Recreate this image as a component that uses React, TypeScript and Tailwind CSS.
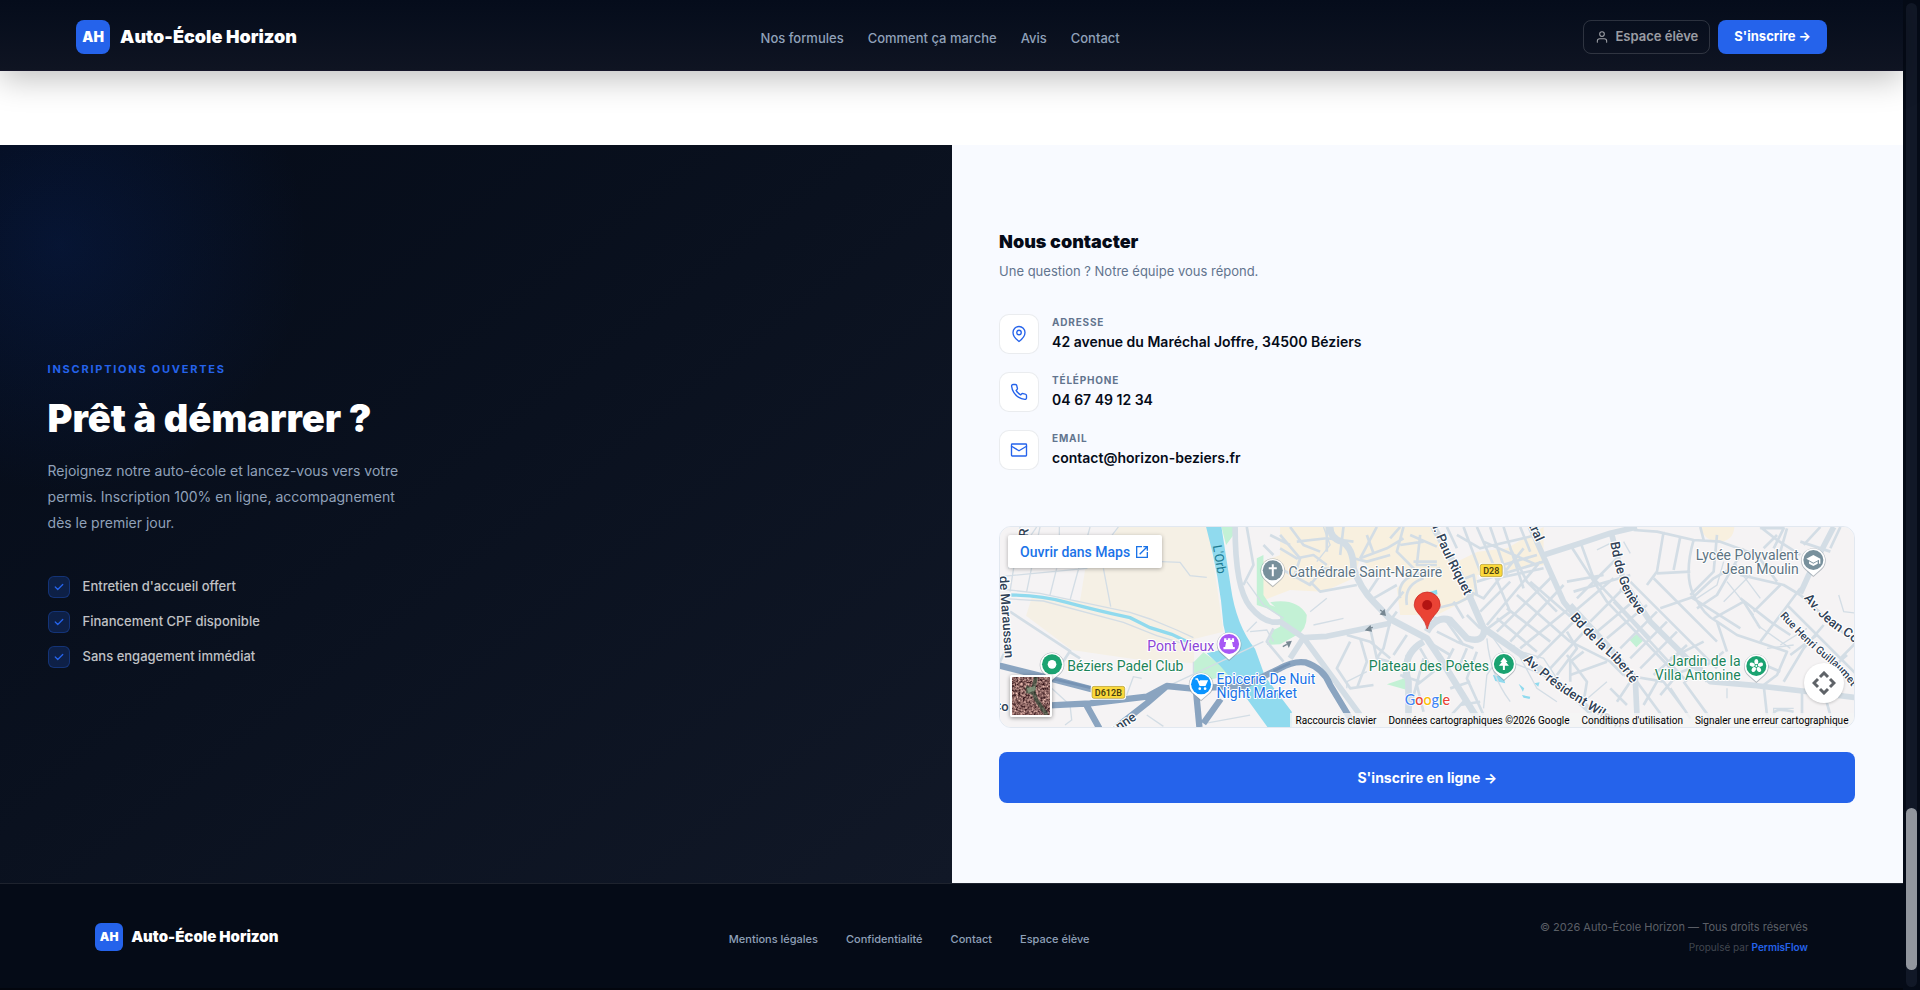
import type { ReactNode } from "react"

const display = "font-['Inter',sans-serif] font-black"

const Icon = ({ size, stroke = 2, children }: { size: number; stroke?: number; children: ReactNode }) => (
    <svg width={size} height={size} viewBox="0 0 24 24" fill="none" stroke="currentColor" strokeWidth={stroke} strokeLinecap="round" strokeLinejoin="round" aria-hidden="true">
        {children}
    </svg>
)

const navLinks = ["Nos formules", "Comment ça marche", "Avis", "Contact"]
const footerLinks = ["Mentions légales", "Confidentialité", "Contact", "Espace élève"]
const perks = ["Entretien d'accueil offert", "Financement CPF disponible", "Sans engagement immédiat"]

const contacts = [
    {
        label: "Adresse",
        value: "42 avenue du Maréchal Joffre, 34500 Béziers",
        icon: (
            <>
                <path d="M20 10c0 6-8 12-8 12s-8-6-8-12a8 8 0 0 1 16 0z" />
                <circle cx="12" cy="10" r="3" />
            </>
        ),
    },
    {
        label: "Téléphone",
        value: "04 67 49 12 34",
        href: "tel:0467491234",
        icon: (
            <path d="M22 16.92v3a2 2 0 0 1-2.18 2 19.79 19.79 0 0 1-8.63-3.07 19.5 19.5 0 0 1-6-6 19.79 19.79 0 0 1-3.07-8.67A2 2 0 0 1 4.11 2h3a2 2 0 0 1 2 1.72 12.84 12.84 0 0 0 .7 2.81 2 2 0 0 1-.45 2.11L8.09 9.91a16 16 0 0 0 6 6l1.27-1.27a2 2 0 0 1 2.11-.45 12.84 12.84 0 0 0 2.81.7A2 2 0 0 1 22 16.92z" />
        ),
    },
    {
        label: "Email",
        value: "contact@horizon-beziers.fr",
        href: "mailto:contact@horizon-beziers.fr",
        icon: (
            <>
                <rect x="2" y="4" width="20" height="16" rx="1" />
                <path d="M22 7l-10 6L2 7" />
            </>
        ),
    },
]

const Header = () => (
    <header className="relative z-10 flex h-[71px] items-center justify-between border-b border-[#15152a] bg-linear-to-b from-[#050c1b] to-[#0f1422] px-[4%] pt-1 shadow-[0_8px_32px_rgba(0,0,0,0.25)]">
        <a href="#" className="flex items-center gap-2.5">
            <span className={`${display} flex size-[34px] items-center justify-center rounded-lg bg-[#2563eb] text-sm text-white`}>AH</span>
            <span className={`${display} text-lg text-white`}>Auto-École Horizon</span>
        </a>
        <nav className="flex gap-6 pt-1 text-[13px] font-medium text-slate-400">
            {navLinks.map((link) => (
                <a key={link} href="#">{link}</a>
            ))}
        </nav>
        <div className="flex gap-2">
            <a href="#" className="flex h-[34px] items-center gap-1.5 rounded-lg border border-white/15 px-[11px] text-[13px] font-semibold text-white/60">
                <Icon size={14} stroke={1.8}>
                    <path d="M20 21v-2a4 4 0 0 0-4-4H8a4 4 0 0 0-4 4v2" />
                    <circle cx="12" cy="7" r="4" />
                </Icon>
                Espace élève
            </a>
            <button className="h-[34px] rounded-lg bg-[#2563eb] px-4 text-[13px] font-bold text-white">S'inscrire →</button>
        </div>
    </header>
)

const Pitch = () => (
    <div className="relative flex flex-col justify-center overflow-hidden bg-linear-to-br from-[#050b18] to-[#111827] px-[5%] py-20">
        <div className="absolute -top-[150px] -left-[190px] size-[500px] rounded-full bg-[radial-gradient(circle,rgba(10,60,170,0.18),transparent_70%)]" />
        <div className="relative max-w-[360px]">
            <p className="text-[11px] leading-4 font-bold tracking-[0.16em] text-[#2563eb] uppercase">Inscriptions ouvertes</p>
            <h2 className={`${display} mt-4 text-[38px] leading-[50px] whitespace-nowrap text-white`}>Prêt à démarrer ?</h2>
            <p className="mt-[15px] text-sm leading-[26px] text-slate-400">
                Rejoignez notre auto-école et lancez-vous vers votre permis. Inscription 100% en ligne, accompagnement dès le premier jour.
            </p>
            <ul className="mt-10 flex flex-col gap-[13px]">
                {perks.map((perk) => (
                    <li key={perk} className="flex h-[22px] items-center gap-[13px] text-[13px] font-medium text-white/75">
                        <span className="flex size-[22px] items-center justify-center rounded-md border border-[#2563eb]/30 bg-[#2563eb]/20 text-[#2563eb]">
                            <Icon size={10} stroke={3}>
                                <path d="M21 6L9 18l-6-6" />
                            </Icon>
                        </span>
                        {perk}
                    </li>
                ))}
            </ul>
        </div>
    </div>
)

const Pin = ({ x, y, color, children }: { x: number; y: number; color: string; children?: ReactNode }) => (
    <g transform={`translate(${x} ${y})`}>
        <path d="M0 51L-24 30A37 37 0 1 1 24 30Z" fill="#7f8c98" opacity=".55" />
        <path d="M0 47L-22 28A35 35 0 1 1 22 28Z" fill="#fff" />
        <circle r="30" fill={color} />
        {children}
    </g>
)

// Drawn at three units per pixel
const MapDrawing = () => (
    <svg className="block h-[200px] w-full bg-[#f5f3f4]" viewBox="30 36 2562 600" preserveAspectRatio="xMidYMid slice" role="img" aria-label="Carte de Béziers">
        <defs>
            <path id="riquet" d="M1318 14Q1352 105 1384 165T1436 270" />
            <path id="geneve" d="M1860 82Q1880 196 1908 244T1976 330" />
            <path id="liberte" d="M1738 308Q1800 378 1850 420T1940 534" />
            <path id="wilson" d="M1598 436Q1680 511 1740 548T1920 664" />
            <path id="jean" d="M2440 250Q2500 324 2550 354T2640 434" />
            <path id="rue" d="M2368 303Q2440 383 2510 438T2610 562" />
        </defs>
        {/* ground */}
        <g fill="#f5f0e5">
            <path d="M385 36H655L700 350 612 372V445L430 432 245 405 108 302 128 240 270 258 285 165 300 120H340Z" />
            <path d="M870 36H1090L1180 36 1200 80 1170 140 1110 130 1090 190 1000 230 900 225 810 260 815 140 870 120Z" fill="#f8f0df" />
            <path d="M1110 60L1150 36H1320L1380 150 1462 110 1550 100 1660 36V150L1460 180V240L1340 300 1230 300 1220 220 1260 180 1150 170 1110 130Z" fill="#f8f0df" />
            <path d="M2130 36H2232Q2230 80 2180 82 2140 75 2130 36Z" fill="#f8f0df" />
        </g>
        <g fill="#c3f1d5">
            <path d="M694 36H730V60L708 90ZM800 130L820 120V240L840 270 900 290V320L830 280 800 270Z" />
            <path d="M612 440V505L720 480 700 455 640 412Z" />
            <path d="M840 262Q920 248 950 300 950 345 920 360L870 388 830 390 850 345 870 335V290Z" />
            <path d="M1190 508L1252 487 1248 524ZM1918 375L1940 356 1960 376 1938 397Z" />
        </g>
        <g fill="#90daee">
            <path d="M648 36H694L722 215Q738 330 795 402L825 485 905 590V636H832L742 512 690 452 650 415 690 405Q715 380 700 330 690 190 648 36Z" />
            <path d="M1315 232L1340 224 1342 238 1325 242ZM1508 480L1540 485 1545 505 1515 498ZM1585 506L1602 520 1598 530ZM1595 540L1620 545 1618 552 1600 548ZM1632 505L1648 502 1644 515Z" />
        </g>
        <path d="M50 240Q150 240 230 262T420 308L480 338 545 358 592 380" fill="none" stroke="#90daee" strokeWidth="10" />
        {/* lanes */}
        <g fill="none" stroke="#d3dde5" strokeWidth="4">
            <path d="M30 222L150 235 420 292 480 312 560 345 610 368M30 250L160 258 400 322 500 362 600 392M55 160L140 36M90 36L60 230M150 36L110 230M208 36V85L300 92M300 36L240 255M385 36L290 160 30 185M100 150H290M200 160L180 240M340 160L362 275" />
            <path d="M515 140L570 142 600 182 650 187M770 200L820 270 880 310M780 350L830 345 850 380M225 630L245 615 240 570 185 520M410 540L430 485 455 490M470 600L520 634M645 625L780 600" />
            <path d="M610 440V510M540 510L820 380M800 320L770 350M1000 36L1020 90 980 140M960 290L1010 250M970 330L1060 310M1130 470L1070 500V520M1480 580L1490 480 1530 420" />
            <path d="M1490 370Q1500 480 1560 560M1510 370L1560 440 1660 480M1570 390L1640 520 1700 560M1560 400L1660 430 1720 520" />
            <path d="M1820 105L1860 85M1900 80L1920 115M2120 250L2180 210 2200 140M2210 200L2290 300M2250 170L2310 250M2280 180L2200 260M2370 390L2450 340M2545 240L2560 290 2600 295M2300 330L2400 400M2330 400L2410 390M1780 560L1850 500M2210 550V520M2350 600V580H2410" />
        </g>
        {/* streets */}
        <g fill="none" stroke="#d3dde5" strokeWidth="8" strokeLinejoin="round">
            <path d="M30 440L60 380M60 290L240 408 180 500M235 408L270 430M770 36L790 150 760 210M840 60L900 90M820 90L850 120M870 60L930 130 910 190M880 440L830 380 850 340" />
            <path d="M870 100L920 130 970 120 1010 150M900 36L940 90 990 110M920 80L1010 70 1090 80M1010 36V110M1060 36L1050 120M870 160L960 210 1000 160 1090 170M960 200L990 230 1100 210M1090 130L1130 140 1200 120M1200 70L1230 36M1110 130L1160 36" />
            <path d="M1110 130L1190 100 1240 70M1150 115L1130 60M1230 90L1300 80M1240 36L1220 110 1290 180M1260 60L1340 95M1270 140H1340M1290 60L1280 150 1340 150M1230 250Q1220 200 1270 180L1350 160M1250 270Q1240 210 1300 190M1150 250L1220 210M1190 290L1240 230M1130 240L1170 180M1190 330L1220 290" />
            <path d="M1070 360L1140 380 1200 430M1080 380L1040 460 1080 520 1150 510M1110 370L1130 440 1100 520M1140 340L1160 430 1200 440M1200 320L1180 400 1160 430M1250 360L1210 420M1230 480L1290 500M1250 420L1240 490M1300 430L1260 580M1290 400L1330 470 1280 510 1300 590" />
            <path d="M1340 280L1400 265 1450 240M1310 300L1370 320 1420 390M1390 260L1420 310M1430 300L1470 340M1340 350L1400 380 1450 400M1330 390L1380 420M1390 400L1370 440M1430 400L1400 470M1460 410L1430 490 1480 600M1350 460L1410 450M1380 520L1440 500M1410 570L1470 560M1350 636L1420 560" />
            <path d="M1400 60L1470 100 1640 60M1370 36L1400 100M1420 36L1470 170M1460 36L1510 150M1500 36L1550 180M1540 36L1600 220M1590 36L1620 110M1480 80L1640 150M1460 200L1660 140M1470 170L1640 120M1500 150L1560 290M1520 190L1660 160M1560 100L1610 200 1700 290M1400 200L1450 180 1460 240M1440 230L1480 250 1600 100M1470 290L1560 200M1490 330L1650 140M1520 350L1690 180M1560 380L1720 210M1590 400L1750 270M1640 430L1770 300M1680 460L1800 330M1550 280L1680 380M1580 240L1740 380M1620 200L1770 330M1520 310L1640 410M1480 350L1560 290M1700 480L1760 400 1730 350M1740 500V440L1780 410" />
            <path d="M1740 90L1850 260 2060 480M1770 80L1810 190 1980 370M1730 200L1840 180M1750 230L1920 180M1760 250L1880 130M1740 300L1870 190M1800 320L1900 220M1820 350L1940 250M1850 370L1970 270M1890 400L2000 290M1920 430L2030 320M1950 460L2060 350M1990 480L2090 390M1760 300L1910 460M1870 260L2090 500M1890 220L2150 500M1920 200L2180 460M1990 190L2180 380" />
            <path d="M1930 45L2000 50 2110 75 2190 80 2300 120 2360 200M2020 50L2000 170 1970 210M2070 65L2050 165M2110 75Q2080 180 2110 240T2180 320L2210 410M2000 175L2100 170M2010 280L2110 245 2170 190 2240 150M2100 245L2250 340M2170 310L2260 260 2310 340M2180 320L2240 360 2390 410 2360 480 2320 510M2130 36L2140 75" />
            <path d="M2180 60L2170 170 2100 240M2310 40H2380L2350 100M2390 40L2370 110M2360 60L2320 100M2260 100L2180 240 2120 280M2310 36L2360 75 2430 120M2490 36L2440 90M2430 80L2520 110M2550 36L2520 100M2250 180L2380 210 2430 240M2250 250L2340 320 2400 360M2370 210L2290 290M2430 220L2310 380M2390 270L2600 480M2430 240L2600 390M2480 360L2400 420M2500 330L2440 400M2550 430L2600 380M2440 400L2380 500M2570 420L2500 480M2540 440L2600 520" />
            <path d="M1740 380L1860 440 1900 480M1740 480L1850 440M1730 420L1790 500 1780 560M1900 480L2020 500 2080 580M1920 500L1880 560M2000 500L1960 570M2040 520L2100 610M2020 490L2130 450 2150 500M2200 410L2150 450M2060 480L2010 540M2080 500L2160 610M1940 500L2040 636M1910 570L1860 520M2320 510L2330 600M2435 530V600M2350 600Q2350 575 2410 590M2500 530L2520 600M2040 430L2140 380M2300 440L2370 470" />
        </g>
        {/* avenues */}
        <g fill="none" stroke="#d3dde5" strokeWidth="20" strokeLinejoin="round">
            <path d="M1020 36Q1020 70 1055 80 1090 100 1090 160 1110 220 1150 260L1200 312 1310 370 1350 430 1430 560 1480 640M1300 380Q1230 420 1255 500V636M1310 350Q1340 300 1380 315L1430 370Q1480 385 1482 345M1330 36L1410 180 1480 340 1610 430 1770 560 1850 636" />
            <path d="M735 36Q735 220 780 275T870 320L940 368 1010 364 1200 325M940 368L1110 600M940 368L900 430M1620 36L1720 260 1760 310M1660 120L1770 85 1860 55 1940 36M1865 60L1900 200 1980 320 2060 400 2160 500 2300 512 2430 527 2600 548M1740 270L1860 400 1935 490 1940 600M2530 36L2455 180 2430 235" strokeWidth="17" />
        </g>
        {/* expressway */}
        <g fill="none" stroke="#8aa4c0" strokeWidth="19" strokeLinejoin="round">
            <path d="M28 452L160 485 310 524M180 571L300 565 400 553 470 545 530 513 600 520 760 513 870 460Q910 437 945 442 1000 460 1020 510L1080 610M288 568L328 640M530 513L470 565 380 636M618 530L628 636M692 552L640 625" />
            <path d="M150 482L310 520M850 468L900 445" strokeWidth="8" stroke="#7693b4" />
        </g>
        <g stroke="#778792" strokeWidth="4" fill="#778792">
            <path d="M1170 285L1180 292M1185 300L1172 297 1182 286ZM1148 337L1138 340M1128 345L1140 334 1143 348ZM878 395L890 388M902 380L890 382 896 394Z" />
        </g>
        {/* road names */}
        <g className="font-['Roboto',sans-serif]" fontSize="39" fontWeight="500" fill="#2f4156" stroke="#fff" strokeWidth="7" paintOrder="stroke" strokeLinejoin="round">
            <text><textPath href="#riquet">ol. Paul Riquet</textPath></text>
            <text><textPath href="#geneve">Bd de Genève</textPath></text>
            <text><textPath href="#liberte">Bd de la Liberté</textPath></text>
            <text><textPath href="#wilson">Av. Président Wilson</textPath></text>
            <text><textPath href="#jean">Av. Jean Co</textPath></text>
            <text fontSize="32"><textPath href="#rue">Rue Henri Guillaumet</textPath></text>
            <text transform="translate(28 184) rotate(86)">de Maraussan</text>
            <text transform="translate(1606 10) rotate(66)">ntral</text>
            <text transform="translate(340 680) rotate(-34)">uronne</text>
            <text x="8" y="588">Co</text>
            <text transform="translate(114 66) rotate(-86)">R</text>
        </g>
        <text transform="translate(668 92) rotate(80)" fontSize="38" fill="#1c7a92" className="font-['Roboto',sans-serif]">L'Orb</text>
        {/* places */}
        <g className="font-['Roboto',sans-serif]" fontSize="42" stroke="#fff" strokeWidth="6" paintOrder="stroke" strokeLinejoin="round">
            <text x="895" y="186" fill="#5d7483">Cathédrale Saint-Nazaire</text>
            <text x="672" y="408" textAnchor="end" fill="#8b45d6">Pont Vieux</text>
            <text x="232" y="468" fill="#1b845a">Béziers Padel Club</text>
            <text x="679" y="507" fill="#1a73e8">Epicerie De Nuit</text>
            <text x="679" y="549" fill="#1a73e8">Night Market</text>
            <text x="1496" y="468" textAnchor="end" fill="#1b845a">Plateau des Poètes</text>
            <text x="2425" y="135" textAnchor="end" fill="#5d7483">Lycée Polyvalent</text>
            <text x="2425" y="177" textAnchor="end" fill="#5d7483">Jean Moulin</text>
            <text x="2251" y="453" textAnchor="end" fill="#1b845a">Jardin de la</text>
            <text x="2251" y="495" textAnchor="end" fill="#1b845a">Villa Antonine</text>
        </g>
        <g className="font-['Roboto',sans-serif]" fontSize="27" fontWeight="600" textAnchor="middle" fill="#4a4110">
            <rect x="304" y="512" width="102" height="40" rx="7" fill="#fbd93b" stroke="#fff" strokeWidth="4" />
            <rect x="306" y="514" width="98" height="36" rx="6" fill="none" stroke="#a8923a" strokeWidth="2" />
            <text x="355" y="542">D612B</text>
            <rect x="1468" y="146" width="70" height="41" rx="7" fill="#fbd93b" stroke="#fff" strokeWidth="4" />
            <rect x="1470" y="148" width="66" height="37" rx="6" fill="none" stroke="#a8923a" strokeWidth="2" />
            <text x="1503" y="177">D28</text>
        </g>
        <Pin x={848} y={166} color="#78909c">
            <path d="M-3 -18h6v9h9v6h-9v21h-6v-21h-9v-6h9z" fill="#fff" />
        </Pin>
        <Pin x={717} y={387} color="#a757f5">
            <path d="M-15 -17h7v5h4v-5h8v5h4v-5h7v11h-6l3 15h5v7h-34v-7h5l3-15h-6z" fill="#fff" />
        </Pin>
        <Pin x={186} y={448} color="#1ba371">
            <circle r="13" fill="#fff" />
        </Pin>
        <Pin x={633} y={508} color="#0a95ff">
            <path d="M-17 -16h6l8 19h15l6-13h-22" fill="none" stroke="#fff" strokeWidth="4" />
            <path d="M-8 -10h26l-6 13h-15z" fill="#fff" />
            <circle cx="-4" cy="13" r="4" fill="#fff" />
            <circle cx="12" cy="13" r="4" fill="#fff" />
        </Pin>
        <Pin x={1541} y={447} color="#1ba371">
            <path d="M0 -20l11 14h-5l9 11h-12v13h-6v-13h-12l9-11h-5z" fill="#fff" />
        </Pin>
        <Pin x={2469} y={135} color="#78909c">
            <path d="M-21 -4L0 -15 21 -4V11h-4V-1L0 8z" fill="#fff" />
            <path d="M-13 4v7l13 7 13-7v-7l-13 7z" fill="#fff" />
        </Pin>
        <Pin x={2298} y={453} color="#1ba371">
            <g fill="#fff">
                {[0, 72, 144, 216, 288].map((angle) => (
                    <ellipse key={angle} cy="-13" rx="6" ry="8" transform={`rotate(${angle})`} />
                ))}
            </g>
            <circle r="3" fill="#fff" />
        </Pin>
        <path d="M1311 342Q1307 322 1291 303 1272 283 1272 270A39 39 0 0 1 1350 270Q1350 283 1331 303 1315 322 1311 342Z" fill="#ea4335" stroke="#c5221f" strokeWidth="2" />
        <circle cx="1311" cy="270" r="15" fill="#b31412" />
        <text x="1244" y="570" fontSize="43" fontWeight="500" className="font-['Lato',sans-serif]" stroke="#fff" strokeWidth="5" paintOrder="stroke">
            <tspan fill="#4285f4">G</tspan>
            <tspan fill="#ea4335">o</tspan>
            <tspan fill="#fbbc04">o</tspan>
            <tspan fill="#4285f4">g</tspan>
            <tspan fill="#34a853">l</tspan>
            <tspan fill="#ea4335">e</tspan>
        </text>
    </svg>
)

const ContactMap = () => (
    <div className="relative mt-14 overflow-hidden rounded-xl border border-slate-200 font-['Roboto',sans-serif]">
        <MapDrawing />
        <a href="#" className="absolute top-2 left-2 flex h-[33px] items-center gap-1 rounded-xs bg-white px-3 text-sm font-medium text-[#1a73e8] shadow-[0_1px_4px_rgba(0,0,0,0.3)]">
            Ouvrir dans Maps
            <svg width="16" height="16" viewBox="0 0 24 24" fill="currentColor" aria-hidden="true">
                <path d="M19 19H5V5h7V3H3v18h18v-9h-2zM14 3v2h3.6l-9.8 9.8 1.4 1.4L19 6.4V10h2V3z" />
            </svg>
        </a>
        <button aria-label="Vue satellite" className="absolute bottom-2.5 left-2.5 size-[42px] overflow-hidden rounded-xs border-2 border-white shadow-[0_1px_4px_rgba(0,0,0,0.4)]">
            <svg width="38" height="38" viewBox="0 0 38 38" aria-hidden="true">
                <filter id="grain" x="0" y="0" width="100%" height="100%" colorInterpolationFilters="sRGB">
                    <feTurbulence type="fractalNoise" baseFrequency="0.45" numOctaves="3" seed="4" />
                    <feColorMatrix values="1.2 0 0 0 -0.06  1.1 0 0 0 -0.16  1 0 0 0 -0.12  0 0 0 0 1" />
                </filter>
                <rect width="38" height="38" filter="url(#grain)" />
                <path d="M14 10l7 4 3 8 6 9 5 7M24 0l-3 14M14 14l8 2" stroke="#34503c" strokeWidth="4" fill="none" opacity=".65" />
                <path d="M15 11l8-2 1 4-8 3z" fill="#8fa68a" opacity=".7" />
            </svg>
        </button>
        <button aria-label="Commandes de la caméra" className="absolute right-2.5 bottom-6 flex size-10 items-center justify-center rounded-full bg-white text-[#5f6368] shadow-[0_1px_3px_rgba(0,0,0,0.2)]">
            <svg width="24" height="24" viewBox="0 0 24 24" fill="none" stroke="currentColor" strokeWidth="3" aria-hidden="true">
                <path d="M8 6l4-4 4 4M8 18l4 4 4-4M6 8l-4 4 4 4M18 8l4 4-4 4" />
            </svg>
        </button>
        <div className="absolute right-0 bottom-0 flex h-3.5 items-center gap-3 bg-[#f5f5f5]/80 px-1.5 text-[10px] text-black">
            <button>Raccourcis clavier</button>
            <span>Données cartographiques ©2026 Google</span>
            <a href="#">Conditions d'utilisation</a>
            <a href="#">Signaler une erreur cartographique</a>
        </div>
    </div>
)

const Contact = () => (
    <div className="bg-[#f8faff] px-[5%] py-20">
        <h2 className={`${display} text-lg leading-[34px] text-[#050b18]`}>Nous contacter</h2>
        <p className="mt-0.5 text-[13px] leading-[21px] text-slate-500">Une question ? Notre équipe vous répond.</p>
        <ul className="mt-8 flex flex-col gap-[18px]">
            {contacts.map((item) => (
                <li key={item.label} className="flex h-10 gap-[13px]">
                    <span className="flex size-10 items-center justify-center rounded-[10px] border border-gray-200/80 bg-white text-[#2563eb]">
                        <Icon size={18} stroke={1.8}>{item.icon}</Icon>
                    </span>
                    <div>
                        <p className="text-[10px] leading-4 font-bold tracking-[0.08em] text-slate-500 uppercase">{item.label}</p>
                        <p className="text-sm leading-6 font-semibold text-[#050b18]">
                            {item.href ? <a href={item.href}>{item.value}</a> : item.value}
                        </p>
                    </div>
                </li>
            ))}
        </ul>
        <ContactMap />
        <button className="mt-6 h-[51px] w-full rounded-lg bg-[#2563eb] text-sm font-bold text-white">S'inscrire en ligne →</button>
    </div>
)

const Footer = () => (
    <footer className="flex h-[105px] items-center justify-between border-t border-white/10 bg-[#050b17] px-[5%] pt-0.5">
        <a href="#" className="flex items-center gap-2">
            <span className={`${display} flex size-7 items-center justify-center rounded-md bg-[#2563eb] text-xs text-white`}>AH</span>
            <span className={`${display} text-[15px] text-white`}>Auto-École Horizon</span>
        </a>
        <nav className="flex gap-7 pt-1 text-[11px] font-medium text-slate-400">
            {footerLinks.map((link) => (
                <a key={link} href="#">{link}</a>
            ))}
        </nav>
        <div className="text-right">
            <p className="text-[11px] leading-5 text-white/35">© 2026 Auto-École Horizon — Tous droits réservés</p>
            <p className="text-[10px] leading-5 text-white/25">
                Propulsé par <a href="#" className="font-semibold text-[#2563eb]">PermisFlow</a>
            </p>
        </div>
    </footer>
)

const App = () => (
    <div className="flex min-h-screen bg-[#03060e] font-['Inter',sans-serif]">
        <div className="min-w-0 flex-1">
            <Header />
            <main>
                <div className="h-[74px] bg-white" />
                <section className="grid grid-cols-2">
                    <Pitch />
                    <Contact />
                </section>
            </main>
            <Footer />
        </div>
        <div className="flex w-[17px] bg-[#050b17] px-[3px] py-[3px]">
            <div className="flex w-full flex-col justify-end rounded-full bg-[#111827] pb-[17px]">
                <div className="h-[162px] rounded-full bg-[#92969e]" />
            </div>
        </div>
    </div>
)

export default App
